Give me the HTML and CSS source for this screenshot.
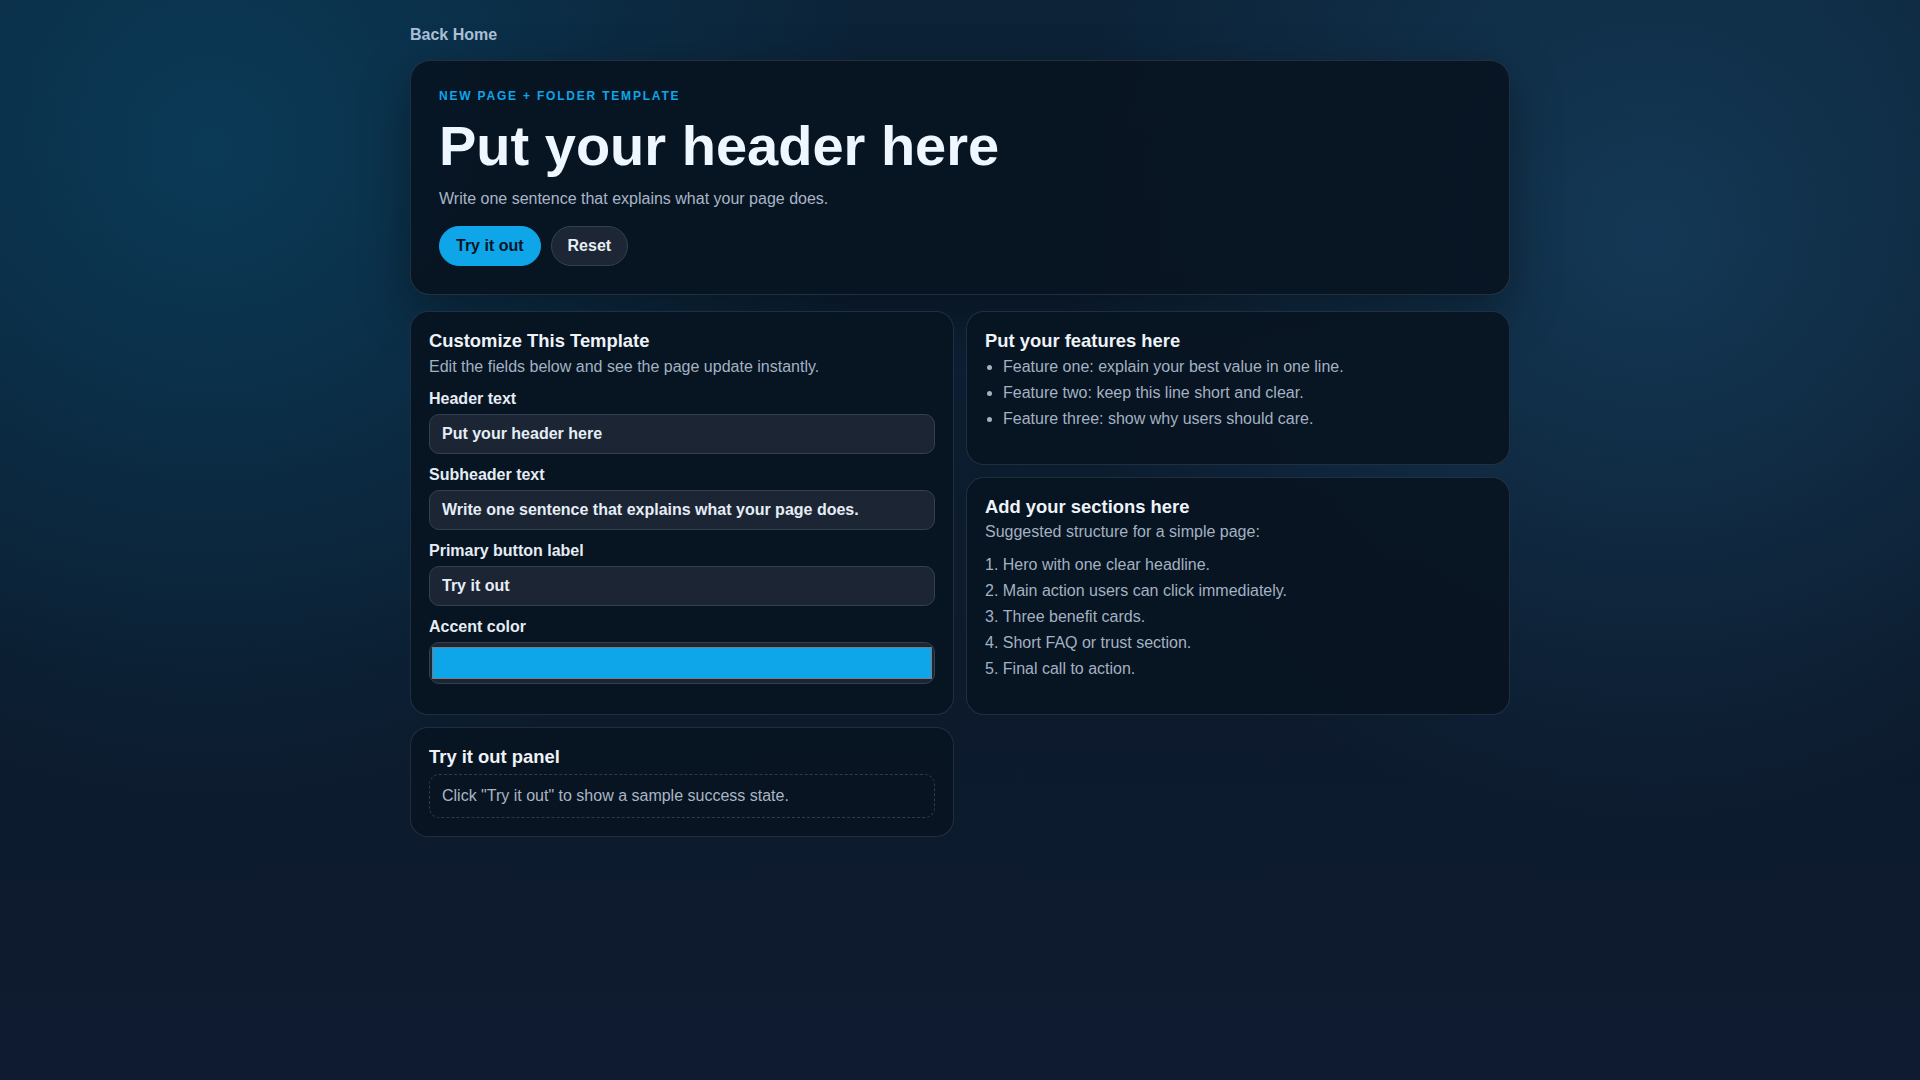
FILE: index.html
```html
<!DOCTYPE html>
<html lang="en">
<head>
<meta charset="utf-8">
<title>New Page Template</title>
<link rel="stylesheet" href="styles.css">
</head>
<body>
<main class="page">
  <a class="back-link" href="#">Back Home</a>

  <section class="card hero">
    <p class="eyebrow">NEW PAGE + FOLDER TEMPLATE</p>
    <h1 class="hero-title">Put your header here</h1>
    <p class="hero-sub">Write one sentence that explains what your page does.</p>
    <div class="hero-actions">
      <button class="btn btn-primary" type="button">Try it out</button>
      <button class="btn btn-ghost" type="button">Reset</button>
    </div>
  </section>

  <div class="grid">
    <section class="card">
      <h2 class="card-title">Customize This Template</h2>
      <p class="card-sub">Edit the fields below and see the page update instantly.</p>
      <form class="form">
        <div class="field">
          <label class="field-label" for="f-header">Header text</label>
          <input class="field-input" id="f-header" type="text" value="Put your header here">
        </div>
        <div class="field">
          <label class="field-label" for="f-sub">Subheader text</label>
          <input class="field-input" id="f-sub" type="text" value="Write one sentence that explains what your page does.">
        </div>
        <div class="field">
          <label class="field-label" for="f-btn">Primary button label</label>
          <input class="field-input" id="f-btn" type="text" value="Try it out">
        </div>
        <div class="field">
          <label class="field-label" for="f-color">Accent color</label>
          <input class="field-input field-color" id="f-color" type="color" value="#0ea5e9">
        </div>
      </form>
    </section>

    <div class="stack">
      <section class="card">
        <h2 class="card-title">Put your features here</h2>
        <ul class="feature-list">
          <li>Feature one: explain your best value in one line.</li>
          <li>Feature two: keep this line short and clear.</li>
          <li>Feature three: show why users should care.</li>
        </ul>
      </section>
      <section class="card">
        <h2 class="card-title">Add your sections here</h2>
        <p class="card-text">Suggested structure for a simple page:</p>
        <ol class="section-list">
          <li>Hero with one clear headline.</li>
          <li>Main action users can click immediately.</li>
          <li>Three benefit cards.</li>
          <li>Short FAQ or trust section.</li>
          <li>Final call to action.</li>
        </ol>
      </section>
    </div>

    <section class="card">
      <h2 class="card-title">Try it out panel</h2>
      <div class="result-box">Click "Try it out" to show a sample success state.</div>
    </section>
  </div>
</main>
</body>
</html>
```

FILE: styles.css
```css
* {
  box-sizing: border-box;
}

html,
body {
  margin: 0;
  min-height: 100%;
}

body {
  min-height: 100vh;
  font-family: "Liberation Sans", Arial, Helvetica, sans-serif;
  font-size: 16px;
  color: #e2e8f0;
  background-color: #0d1828;
  background-image:
    radial-gradient(circle at 11% 14%, rgba(10, 62, 92, 0.85) 0, rgba(10, 62, 92, 0) 34%),
    radial-gradient(circle at 86% 22%, rgba(22, 64, 96, 0.75) 0, rgba(22, 64, 96, 0) 32%),
    linear-gradient(180deg, #0c2338 0%, #0c1a2c 60%, #0e1b30 100%);
  background-attachment: fixed;
}

.page {
  max-width: 1100px;
  margin: 0 auto;
  padding: 25px 0 40px;
}

.back-link {
  display: inline-block;
  font-weight: 700;
  font-size: 16px;
  line-height: 20px;
  color: #a9bfd6;
  text-decoration: none;
  margin-bottom: 15px;
}

.card {
  background: rgba(8, 19, 33, 0.92);
  border: 1px solid rgba(100, 116, 139, 0.28);
  border-radius: 18px;
  padding: 18px;
}

.hero {
  padding: 28px;
  border-radius: 20px;
  box-shadow: 0 18px 50px rgba(0, 0, 0, 0.35);
}

.eyebrow {
  margin: 0 0 12px;
  font-size: 12px;
  line-height: 14px;
  font-weight: 700;
  letter-spacing: 0.15em;
  color: #0ea5e9;
}

.hero-title {
  margin: 0;
  font-size: 56px;
  line-height: 1.1;
  font-weight: 700;
  color: #eef6ff;
}

.hero-sub {
  margin: 10px 0 0;
  font-size: 16px;
  line-height: 24px;
  color: #a9b6c6;
}

.hero-actions {
  display: flex;
  gap: 10px;
  margin-top: 15px;
}

.btn {
  font-family: inherit;
  font-size: 16px;
  font-weight: 700;
  line-height: 18px;
  padding: 10px 16px;
  border-radius: 999px;
  border: 1px solid transparent;
  cursor: pointer;
}

.btn-primary {
  background: #0ea5e9;
  border-color: #0ea5e9;
  color: #0b1526;
}

.btn-ghost {
  background: #1c2634;
  border-color: #334155;
  color: #e8eef5;
}

.grid {
  display: grid;
  grid-template-columns: 1fr 1fr;
  gap: 12px 12px;
  margin-top: 16px;
}

.stack {
  display: flex;
  flex-direction: column;
  gap: 12px;
}

.card-title {
  margin: 0 0 2px;
  font-size: 18.4px;
  line-height: 22px;
  font-weight: 700;
  color: #eef3f8;
}

.card-sub {
  margin: 0;
  font-size: 16px;
  line-height: 26px;
  color: #a3b1c2;
}

.card-text {
  margin: 0 0 8px;
  font-size: 16px;
  line-height: 24px;
  color: #a3b1c2;
}

.form {
  display: flex;
  flex-direction: column;
  gap: 10px;
  margin-top: 8px;
}

.field-label {
  display: block;
  font-size: 16px;
  line-height: 21px;
  font-weight: 700;
  color: #e6ecf3;
  margin-bottom: 5px;
}

.field-input {
  display: block;
  width: 100%;
  height: 40px;
  padding: 0 12px;
  font-family: inherit;
  font-size: 16px;
  font-weight: 700;
  color: #e6edf5;
  background: #1b2534;
  border: 1px solid #324052;
  border-radius: 10px;
  outline: none;
}

.field-color {
  height: 42px;
  padding: 0;
  cursor: pointer;
}

.field-color::-webkit-color-swatch-wrapper {
  padding: 4px 2px;
}

.field-color::-webkit-color-swatch {
  border: 1px solid #777c85;
  border-radius: 0;
}

.feature-list {
  margin: 0 0 14px;
  padding-left: 18px;
  color: #a3b1c2;
  line-height: 26px;
}

.section-list {
  margin: 0 0 14px;
  padding: 0;
  list-style-position: inside;
  color: #a3b1c2;
  line-height: 26px;
}

.result-box {
  margin-top: 6px;
  padding: 9px 12px;
  font-size: 16px;
  line-height: 24px;
  color: #a9b6c6;
  border: 1px dashed #2e3b4d;
  border-radius: 10px;
}
```
